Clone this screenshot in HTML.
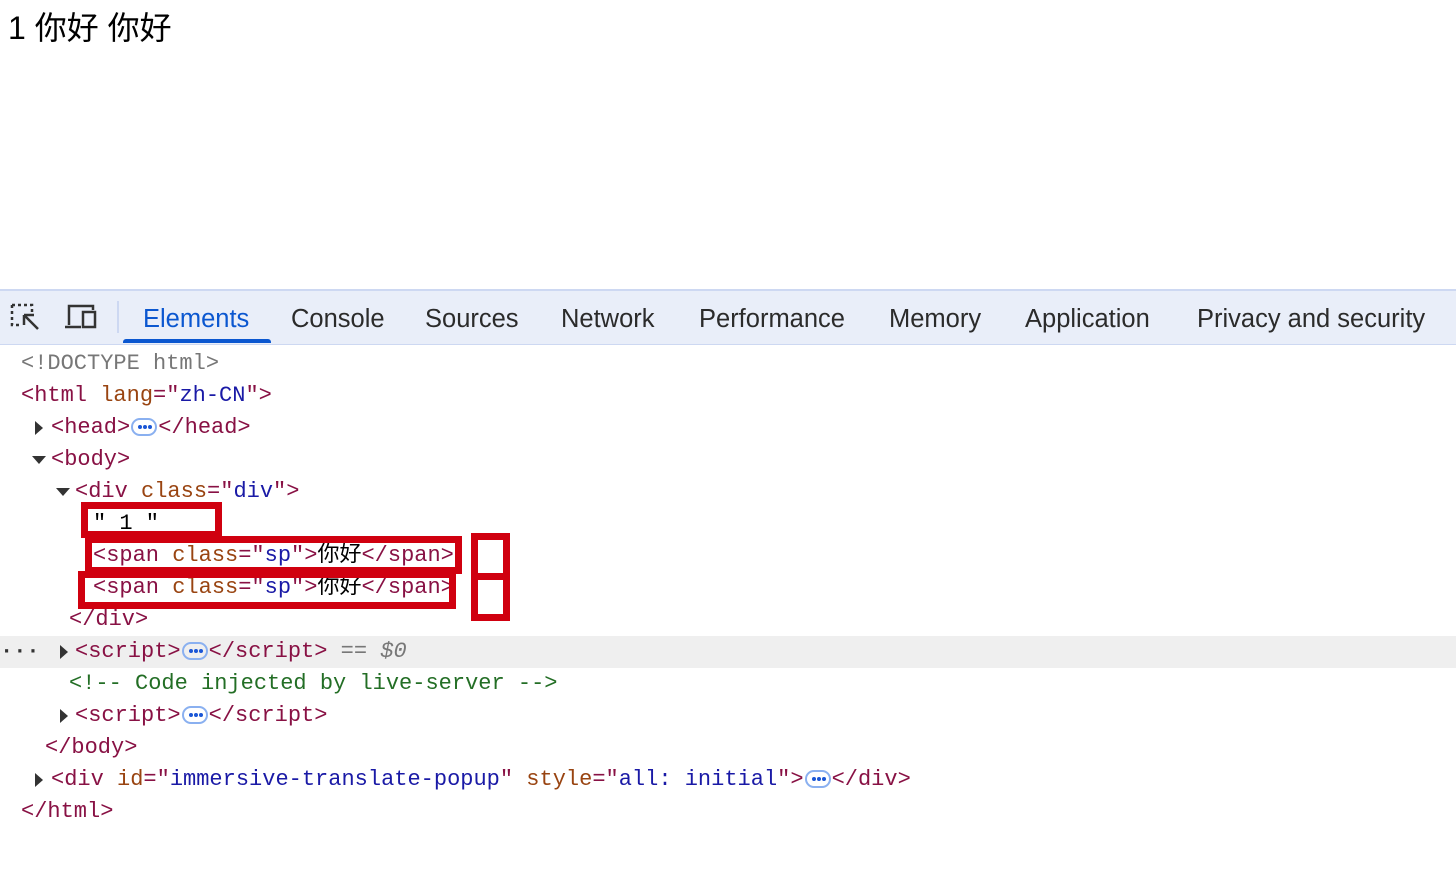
<!DOCTYPE html>
<html><head><meta charset="utf-8"><style>
body{margin:0;width:1456px;height:874px;background:#fff;position:relative;overflow:hidden;font-family:"Liberation Sans","Noto Sans CJK SC",sans-serif}
.top{position:absolute;left:8px;top:3px;font-size:32px;color:#000}
.bar{position:absolute;left:0;top:289px;width:1456px;height:53px;background:#e9eef9;border-top:2px solid #cdd8f2;border-bottom:1px solid #cdd8f2}
.tab{position:absolute;top:14px;font-size:25.5px;color:#2b2b2b}
.code{position:absolute;left:0;top:348px;width:1456px;font-family:"Liberation Mono","Noto Sans CJK SC",monospace;font-size:22px}
.l{height:32px;line-height:32px;white-space:pre;position:relative}
.l>span:first-child{}
.t{color:#881144}.a{color:#994411}.v{color:#1a1aa6}.g{color:#777}.c{color:#236e25}
.dots{display:inline-block;width:26px;height:18px;border:2px solid #8ab0f0;border-radius:9px;vertical-align:middle;box-sizing:border-box;position:relative;margin:0 1px}
.dots:after{content:"";position:absolute;left:5px;top:5px;width:4px;height:4px;border-radius:2px;background:#1a56d6;box-shadow:5px 0 #1a56d6,10px 0 #1a56d6}
.tri{position:absolute;top:9px;width:0;height:0;border-top:7px solid transparent;border-bottom:7px solid transparent;border-left:8px solid #333}
.trd{position:absolute;top:12px;width:0;height:0;border-left:7px solid transparent;border-right:7px solid transparent;border-top:8px solid #333}
.r{position:absolute;border:7px solid #d0000f;box-sizing:border-box}
</style></head><body>
<div class="top">1 你好 你好</div>
<div class="bar">
<svg style="position:absolute;left:10px;top:12px" width="32" height="30" viewBox="0 0 32 30"><path d="M2 2h20v8M2 2v20h8" fill="none" stroke="#333" stroke-width="2.5" stroke-dasharray="3 3"/><path d="M14 12l14 14M14 12v10M14 12h10" fill="none" stroke="#333" stroke-width="2.5"/></svg>
<svg style="position:absolute;left:64px;top:12px" width="34" height="28" viewBox="0 0 34 28"><path d="M5 22V3h24v4M1 24h16" fill="none" stroke="#333" stroke-width="2.5"/><rect x="19" y="9" width="12" height="15" fill="none" stroke="#333" stroke-width="2.5"/></svg>
<div style="position:absolute;left:117px;top:10px;width:2px;height:32px;background:#cdd8f2"></div>
<div class="tab" style="left:143px;color:#0b57d0">Elements</div>
<div style="position:absolute;left:123px;top:48px;width:148px;height:4px;background:#0b57d0;border-radius:3px 3px 0 0"></div>
<div class="tab" style="left:291px">Console</div>
<div class="tab" style="left:425px">Sources</div>
<div class="tab" style="left:561px">Network</div>
<div class="tab" style="left:699px">Performance</div>
<div class="tab" style="left:889px">Memory</div>
<div class="tab" style="left:1025px">Application</div>
<div class="tab" style="left:1197px">Privacy and security</div>
</div>
<div class="code">
<div class="l" style="padding-left:21px"><span class="g">&lt;!DOCTYPE html&gt;</span></div>
<div class="l" style="padding-left:21px"><span class="t">&lt;html </span><span class="a">lang</span><span class="t">="</span><span class="v">zh-CN</span><span class="t">"&gt;</span></div>
<div class="l" style="padding-left:51px"><i class="tri" style="left:35px"></i><span class="t">&lt;head&gt;</span><span class="dots"></span><span class="t">&lt;/head&gt;</span></div>
<div class="l" style="padding-left:51px"><i class="trd" style="left:32px"></i><span class="t">&lt;body&gt;</span></div>
<div class="l" style="padding-left:75px"><i class="trd" style="left:56px"></i><span class="t">&lt;div </span><span class="a">class</span><span class="t">="</span><span class="v">div</span><span class="t">"&gt;</span></div>
<div class="l" style="padding-left:93px">" 1 "</div>
<div class="l" style="padding-left:93px"><span class="t">&lt;span </span><span class="a">class</span><span class="t">="</span><span class="v">sp</span><span class="t">"&gt;</span>你好<span class="t">&lt;/span&gt;</span></div>
<div class="l" style="padding-left:93px"><span class="t">&lt;span </span><span class="a">class</span><span class="t">="</span><span class="v">sp</span><span class="t">"&gt;</span>你好<span class="t">&lt;/span&gt;</span></div>
<div class="l" style="padding-left:69px"><span class="t">&lt;/div&gt;</span></div>
<div class="l" style="padding-left:75px;background:#efefef"><span style="position:absolute;left:0;color:#333;font-weight:bold">···</span><i class="tri" style="left:60px"></i><span class="t">&lt;script&gt;</span><span class="dots"></span><span class="t">&lt;/script&gt;</span><span class="g"> == <i>$0</i></span></div>
<div class="l" style="padding-left:69px"><span class="c">&lt;!-- Code injected by live-server --&gt;</span></div>
<div class="l" style="padding-left:75px"><i class="tri" style="left:60px"></i><span class="t">&lt;script&gt;</span><span class="dots"></span><span class="t">&lt;/script&gt;</span></div>
<div class="l" style="padding-left:45px"><span class="t">&lt;/body&gt;</span></div>
<div class="l" style="padding-left:51px"><i class="tri" style="left:35px"></i><span class="t">&lt;div </span><span class="a">id</span><span class="t">="</span><span class="v">immersive-translate-popup</span><span class="t">" </span><span class="a">style</span><span class="t">="</span><span class="v">all: initial</span><span class="t">"&gt;</span><span class="dots"></span><span class="t">&lt;/div&gt;</span></div>
<div class="l" style="padding-left:21px"><span class="t">&lt;/html&gt;</span></div>
</div>
<div class="r" style="left:81px;top:502px;width:141px;height:36px"></div>
<div class="r" style="left:85px;top:536px;width:377px;height:38px"></div>
<div class="r" style="left:78px;top:571px;width:378px;height:38px"></div>
<div class="r" style="left:471px;top:533px;width:39px;height:47px"></div>
<div class="r" style="left:471px;top:573px;width:39px;height:48px"></div>
</body></html>
